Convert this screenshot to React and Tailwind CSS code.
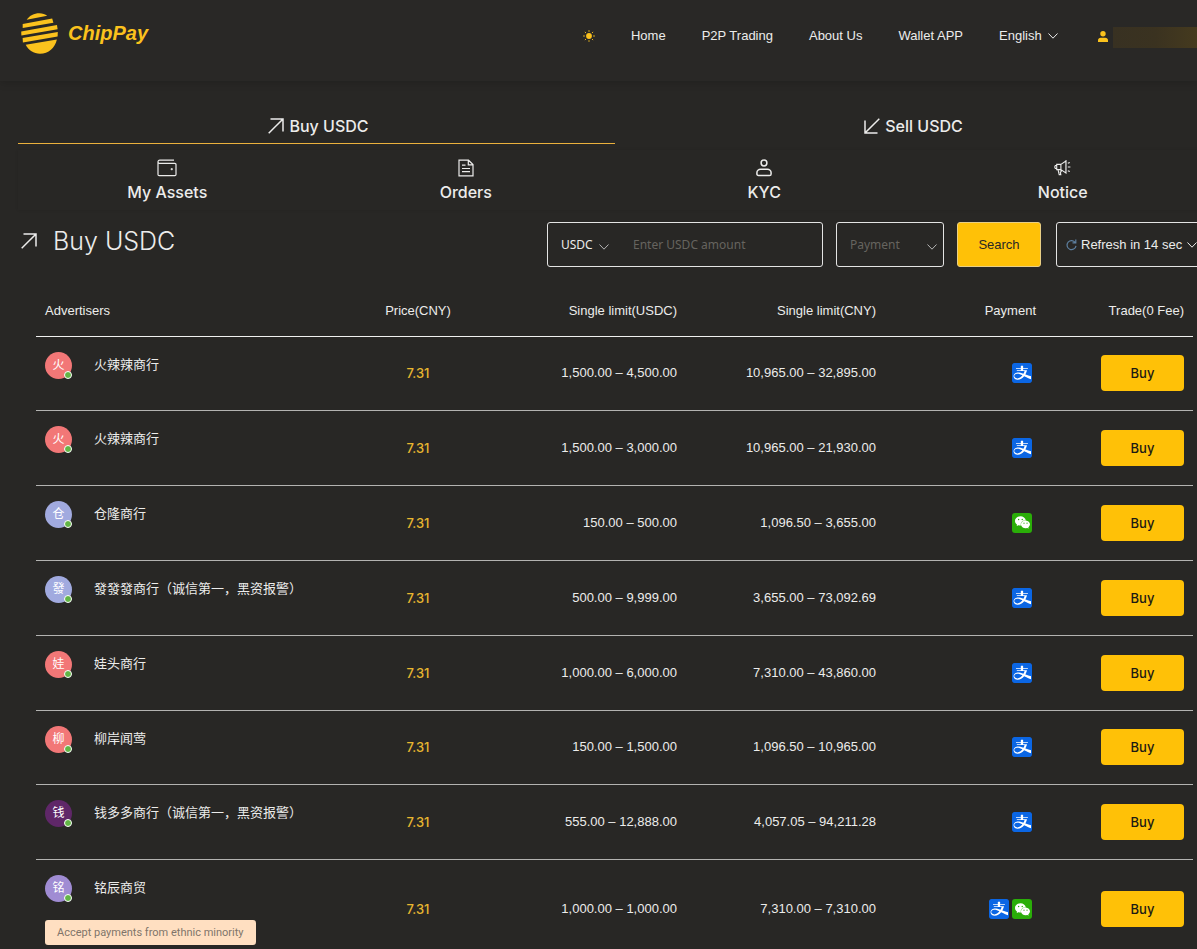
import React from "react";
import { SiAlipay, SiWechat } from "react-icons/si";

function Chevron({ className = "" }) {
  return (
    <svg className={className} width="10" height="6" viewBox="0 0 10 6" fill="none" stroke="currentColor" strokeWidth="1" aria-hidden="true">
      <path d="M.5.5 5 5.2 9.5.5" />
    </svg>
  );
}

function ArrowUpRight() {
  return (
    <svg width="16" height="16" viewBox="0 0 16 16" fill="none" stroke="currentColor" strokeWidth="1.5" aria-hidden="true">
      <path d="M2.5 1H15v12.500M15 1 .7 15.300" />
    </svg>
  );
}

function ArrowDownLeft() {
  return (
    <svg width="16" height="16" viewBox="0 0 16 16" fill="none" stroke="currentColor" strokeWidth="1.5" aria-hidden="true">
      <path d="M1 2.500V15h12.500M1 15 15.300.7" />
    </svg>
  );
}

function Logo() {
  return (
    <a href="#home" className="flex items-center gap-[10px] text-[#fbc21d]">
      <svg width="37" height="41" viewBox="21 12.5 37 41" fill="currentColor" aria-hidden="true">
        <path d="M26.7 19.3C29.6 15 34 12.7 39.3 12.7c3.2 0 6 .9 7.9 2.6z" />
        <path d="M22.7 23.4 52.200 18l1.200 4.200-30.700 5.400z" />
        <path d="m21.2 31 35.800-6.600.6 4.400-36.200 6.300z" />
        <path d="m22.6 37.600 35.200-6.200-.2 4.600-34.700 6z" />
        <path d="M25.7 44.3 56.9 39C55 47.500 48.500 53.200 40 53.200c-6.400 0-11.500-3.400-14.300-8.900z" />
      </svg>
      <span className="text-[20px] leading-6 font-bold italic">ChipPay</span>
    </a>
  );
}

function SunIcon() {
  return (
    <svg width="12" height="12" viewBox="0 0 12 12" fill="#fbc21d" aria-hidden="true">
      <circle cx="6" cy="6" r="2.900" />
      <path d="M5.500.2h1v1.600h-1zM5.500 10.200h1v1.600h-1zM.2 5.500h1.600v1H.2zM10.200 5.500h1.600v1h-1.600z" />
      <g stroke="#fbc21d" strokeWidth="1">
        <path d="m1.900 1.900 1 1M9.100 9.100l1 1M1.900 10.100l1-1M9.100 2.900l1-1" />
      </g>
    </svg>
  );
}

function UserIcon() {
  return (
    <svg width="10" height="11" viewBox="0 0 10 11" fill="#fbc21d" aria-hidden="true">
      <circle cx="5" cy="2.800" r="2.700" />
      <path d="M0 11V9.300C0 7.800 1.200 6.700 2.700 6.700h4.600C8.800 6.700 10 7.800 10 9.300V11z" />
    </svg>
  );
}

function WalletIcon() {
  return (
    <svg width="20" height="18" viewBox="0 0 20 18" fill="none" stroke="currentColor" strokeWidth="1.200" aria-hidden="true">
      <path d="M17 1.200H2.800C1.700 1.200 1 1.900 1 2.800v12.600c0 .7.500 1.200 1.200 1.200h15.600c.7 0 1.200-.5 1.200-1.200V5.500c0-.7-.5-1.200-1.200-1.200H2.500C1.600 4.300 1 3.600 1 2.800" />
      <path d="M14 9.600h1.400v1.200H14z" fill="currentColor" strokeWidth=".6" />
    </svg>
  );
}

function OrdersIcon() {
  return (
    <svg width="16" height="18" viewBox="0 0 16 18" fill="none" stroke="currentColor" strokeWidth="1.200" aria-hidden="true">
      <path d="M10.500 1.200H1v15.600h14V5.600zM10.300 1.400v4.400H15M4 6.200h3.500M4 9.500h8M4 12.700h8" />
    </svg>
  );
}

function KycIcon() {
  return (
    <svg width="16" height="18" viewBox="0 0 16 18" fill="none" stroke="currentColor" strokeWidth="1.500" aria-hidden="true">
      <circle cx="8" cy="4" r="2.900" />
      <path d="M4.600 10.300h6.800c2 0 3.700 1.500 3.700 3.400v1.200c0 .9-.7 1.600-1.600 1.600h-11c-.9 0-1.600-.7-1.600-1.600v-1.200c0-1.900 1.700-3.400 3.700-3.400z" />
    </svg>
  );
}

function NoticeIcon() {
  return (
    <svg width="17" height="18" viewBox="0 0 17 18" fill="none" stroke="currentColor" strokeWidth="1.100" aria-hidden="true">
      <path d="M2.700 5.400h4.200v5.200H2.700zM2.700 6.500H1.300L.7 8l.6 1.500h1.400M6.900 5.400l5-3.400v12l-5-3.400M12 1v14M4 10.600l1.200 5h1.600l-.5-2.600.9-.3-.4-2M13.800 4.200l2-.8M13.800 8h2.600M13.800 11.700l2 .8" />
    </svg>
  );
}

function RefreshIcon() {
  return (
    <svg width="11" height="12" viewBox="0 0 11 12" fill="none" stroke="#5d7f9f" strokeWidth="1.200" aria-hidden="true">
      <path d="M9.300 3.600A4.500 4.500 0 1 0 10 6.800M9.800.6v3.300H6.500" />
    </svg>
  );
}

function PaymentBadge({ kind }) {
  if (kind === "alipay") {
    return (
      <span className="flex size-5 items-center justify-center overflow-hidden rounded-[3px] bg-[#0b66e4] text-[#0b66e4]" role="img" aria-label="Alipay">
        <svg width="20" height="20" viewBox="0 0 20 20" aria-hidden="true">
          <path fill="#fff" d="M1 1h18v18H1z" />
          <SiAlipay size={20} />
        </svg>
      </span>
    );
  }
  return (
    <span className="flex size-5 items-center justify-center rounded-[3px] bg-[#2aae08] text-white" role="img" aria-label="WeChat Pay">
      <SiWechat className="size-[15px]" />
    </span>
  );
}

const navLinks = ["Home", "P2P Trading", "About Us", "Wallet APP"];

const sections = [
  { label: "My Assets", Icon: WalletIcon },
  { label: "Orders", Icon: OrdersIcon },
  { label: "KYC", Icon: KycIcon },
  { label: "Notice", Icon: NoticeIcon },
];

const offers = [
  { name: "火辣辣商行", color: "bg-[#f27777]", usdc: "1,500.00 – 4,500.00", cny: "10,965.00 – 32,895.00", pay: ["alipay"] },
  { name: "火辣辣商行", color: "bg-[#f27777]", usdc: "1,500.00 – 3,000.00", cny: "10,965.00 – 21,930.00", pay: ["alipay"] },
  { name: "仓隆商行", color: "bg-[#a1aadf]", usdc: "150.00 – 500.00", cny: "1,096.50 – 3,655.00", pay: ["wechat"] },
  { name: "發發發商行（诚信第一，黑资报警）", color: "bg-[#a1aadf]", usdc: "500.00 – 9,999.00", cny: "3,655.00 – 73,092.69", pay: ["alipay"] },
  { name: "娃头商行", color: "bg-[#f27777]", usdc: "1,000.00 – 6,000.00", cny: "7,310.00 – 43,860.00", pay: ["alipay"] },
  { name: "柳岸闻莺", color: "bg-[#f27777]", usdc: "150.00 – 1,500.00", cny: "1,096.50 – 10,965.00", pay: ["alipay"] },
  { name: "钱多多商行（诚信第一，黑资报警）", color: "bg-[#5f2768]", usdc: "555.00 – 12,888.00", cny: "4,057.05 – 94,211.28", pay: ["alipay"] },
  { name: "铭辰商贸", color: "bg-[#a08cd3]", usdc: "1,000.00 – 1,000.00", cny: "7,310.00 – 7,310.00", pay: ["alipay", "wechat"], note: "Accept payments from ethnic minority" },
];

function Header() {
  return (
    <header className="bg-[#292826] pb-[9px] shadow-[0_2px_8px_rgba(0,0,0,0.16)]">
      <div className="flex h-[72px] items-center pl-[21px]">
        <div className="pb-[6px]">
          <Logo />
        </div>
        <nav className="ml-auto flex items-center gap-9 whitespace-nowrap">
          <button type="button" aria-label="Switch theme">
            <SunIcon />
          </button>
          {navLinks.map((label) => (
            <a key={label} href="#nav">{label}</a>
          ))}
          <label className="flex items-center gap-[6px]">
            <select aria-label="Language" className="appearance-none bg-transparent outline-none">
              <option>English</option>
            </select>
            <Chevron />
          </label>
        </nav>
        <button type="button" aria-label="Account" className="ml-10 flex items-center gap-[5px]">
          <UserIcon />
          <span className="mt-0.5 block h-[21px] w-[84px] bg-linear-to-r from-[#383122] via-[#3a3220] to-[#453a1e]" />
        </button>
      </div>
    </header>
  );
}

function Filters() {
  const field = "flex h-[45px] items-center rounded-[3px] border border-[#e4e4e4]";
  return (
    <form className="flex items-center gap-[13px] text-[13px]" onSubmit={(e) => e.preventDefault()}>
      <div className={field + " w-[276px] pl-[13px] font-['Noto_Sans',sans-serif] text-[12px]"}>
        <label className="flex items-center gap-[6px]">
          <select aria-label="Currency" className="appearance-none bg-transparent outline-none">
            <option>USDC</option>
          </select>
          <Chevron className="mt-1 text-[#b5b5b5]" />
        </label>
        <input
          aria-label="USDC amount"
          placeholder="Enter USDC amount"
          className="ml-6 min-w-0 flex-1 bg-transparent outline-none placeholder:text-[#66645f]"
        />
      </div>
      <label className={field + " w-[108px] justify-between pr-[6px] pl-[13px] font-['Noto_Sans',sans-serif] text-[12px] text-[#66645f]"}>
        <select aria-label="Payment" className="appearance-none bg-transparent outline-none">
          <option>Payment</option>
        </select>
        <Chevron className="mt-1 text-[#b5b5b5]" />
      </label>
      <button type="submit" className="h-[45px] w-[84px] rounded-[3px] border border-[#e9cf85] bg-[#ffc107] text-[#292826]">
        Search
      </button>
      <label className={field + " ml-[2px] w-[156px] gap-[4px] pl-[9px] whitespace-nowrap"}>
        <RefreshIcon />
        <select aria-label="Refresh interval" className="appearance-none bg-transparent outline-none">
          <option>Refresh in 14 sec</option>
        </select>
        <Chevron className="shrink-0" />
      </label>
    </form>
  );
}

function OfferRow({ offer }) {
  return (
    <tr className="h-[75px] border-b border-[#b3b3b1] nth-[5n+1]:h-[74px]">
      <td className="px-[9px] pt-[15px] pb-[14px] text-left align-top">
        <div className="flex items-start gap-[22px]">
          <span className={"relative flex size-[27px] shrink-0 items-center justify-center rounded-full text-[12px] text-white " + offer.color}>
            {offer.name[0]}
            <span className="absolute right-0 bottom-0 size-2 rounded-full border border-white bg-[#62b546]" />
          </span>
          <span className="text-[13px] leading-[25px] whitespace-nowrap">{offer.name}</span>
        </div>
        {offer.note && (
          <span className="mt-[18px] inline-block rounded-[3px] bg-[#ffdfc1] px-3 font-['Roboto',sans-serif] text-[11px] leading-[25px] whitespace-nowrap text-[#80756a]">
            {offer.note}
          </span>
        )}
      </td>
      <td className="text-center font-['Inter',sans-serif] font-medium text-[#e8b730]">7.31</td>
      <td className="pr-[9px] text-right whitespace-nowrap">{offer.usdc}</td>
      <td className="pr-[9px] text-right whitespace-nowrap">{offer.cny}</td>
      <td className="pr-[13px]">
        <div className="flex justify-end gap-[3px]">
          {offer.pay.map((kind) => (
            <PaymentBadge key={kind} kind={kind} />
          ))}
        </div>
      </td>
      <td className="pr-[9px] text-right">
        <button type="button" className="h-9 w-[83px] rounded-[4px] bg-[#ffc107] font-['Inter',sans-serif] font-medium text-[#1c1a14]">
          Buy
        </button>
      </td>
    </tr>
  );
}

export default function App() {
  return (
    <div className="min-h-screen overflow-hidden bg-[#282725] font-['Liberation_Sans','Noto_Sans_CJK_SC',sans-serif] text-[13px] leading-5 text-[#ececeb]">
      <Header />
      <main className="-mr-[15px] pt-[26px] pl-[18px]">
        <div className="grid grid-cols-2 font-['Inter',sans-serif] text-[16px] font-medium" role="tablist">
          <button type="button" role="tab" aria-selected="true" className="flex h-[37px] items-center justify-center gap-[5px] pl-1 shadow-[inset_0_-1px_0_#eab03c]">
            <ArrowUpRight />
            Buy USDC
          </button>
          <button type="button" role="tab" aria-selected="false" className="flex h-[37px] items-center justify-center gap-[5px]">
            <ArrowDownLeft />
            Sell USDC
          </button>
        </div>
        <nav className="mt-[6px] grid grid-cols-4 font-['Inter',sans-serif] text-[16px] font-medium shadow-[0_0_3px_rgba(0,0,0,0.1)]">
          {sections.map(({ label, Icon }) => (
            <a key={label} href="#section" className="flex flex-col items-center gap-[5px] pt-[9px] pb-2">
              <Icon />
              <span className="leading-5">{label}</span>
            </a>
          ))}
        </nav>
        <div className="mt-[12px] flex items-start justify-between">
          <h1 className="flex items-center gap-4 pt-[3px] pl-[3px] font-['Inter',sans-serif] text-[25px] leading-8 font-light">
            <ArrowUpRight />
            Buy USDC
          </h1>
          <Filters />
        </div>
        <section className="mt-[16px] pr-[19px] pl-[18px]">
          <table className="w-full table-fixed border-collapse">
            <thead>
              <tr className="h-[53px] border-b border-[#f0f0ef]">
                <th className="w-[284px] px-[9px] pt-[3px] text-left font-normal">Advertisers</th>
                <th className="w-[196px] pt-[3px] text-center font-normal">Price(CNY)</th>
                <th className="w-[170px] pt-[3px] pr-[9px] text-right font-normal">Single limit(USDC)</th>
                <th className="w-[199px] pt-[3px] pr-[9px] text-right font-normal">Single limit(CNY)</th>
                <th className="w-[160px] pt-[3px] pr-[9px] text-right font-normal">Payment</th>
                <th className="w-[148px] pt-[3px] pr-[9px] text-right font-normal">Trade(0 Fee)</th>
              </tr>
            </thead>
            <tbody>
              {offers.map((offer, i) => (
                <OfferRow key={i} offer={offer} />
              ))}
            </tbody>
          </table>
        </section>
      </main>
    </div>
  );
}
